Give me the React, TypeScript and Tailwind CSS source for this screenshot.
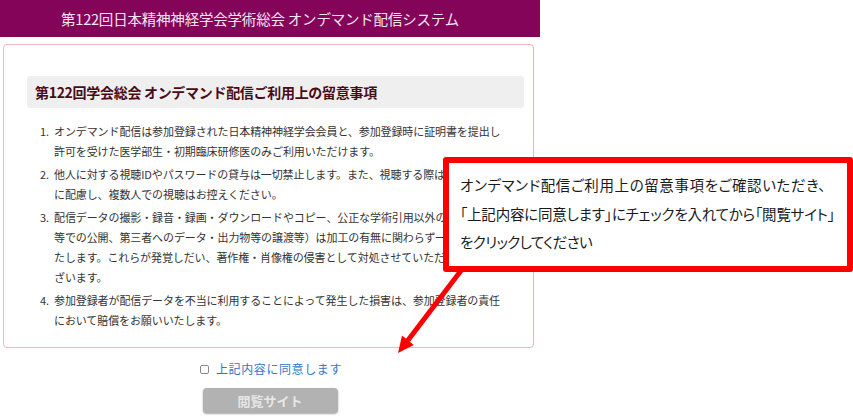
import { useState } from "react"

const notes: string[][] = [
  [
    "オンデマンド配信は参加登録された日本精神神経学会会員と、参加登録時に証明書を提出し",
    "許可を受けた医学部生・初期臨床研修医のみご利用いただけます。",
  ],
  [
    "他人に対する視聴IDやパスワードの貸与は一切禁止します。また、視聴する際は周囲の環境",
    "に配慮し、複数人での視聴はお控えください。",
  ],
  [
    "配信データの撮影・録音・録画・ダウンロードやコピー、公正な学術引用以外の二次利用（SNS",
    "等での公開、第三者へのデータ・出力物等の譲渡等）は加工の有無に関わらず一切禁止い",
    "たします。これらが発覚しだい、著作権・肖像権の侵害として対処させていただく場合がご",
    "ざいます。",
  ],
  [
    "参加登録者が配信データを不当に利用することによって発生した損害は、参加登録者の責任",
    "において賠償をお願いいたします。",
  ],
]

export default function App() {
  const [agreed, setAgreed] = useState(false)

  return (
    <div
      className="relative w-[853px] h-[417px] overflow-hidden bg-white"
      style={{ fontFamily: '"Noto Sans CJK JP", "Noto Sans", sans-serif' }}
    >
      <div className="w-[540px] flex flex-col">
        {/* Site header */}
        <header className="h-[37px] bg-[#84045a] flex items-center justify-center pr-[20px] text-[14.5px] text-[#f4e6ef] tracking-[-0.2px]">
          第122回日本精神神経学会学術総会 オンデマンド配信システム
        </header>

        {/* Terms panel */}
        <section className="mt-[7px] ml-[3px] w-[531px] h-[304px] border border-[#f3b4bb] rounded-[4px] pt-[31px]">
          <div className="ml-[23px] w-[497px] h-[32px] bg-[#efefef] rounded-[3px] flex items-center pl-[8px]">
            <h2 className="text-[14px] font-bold text-[#4a0b16] tracking-[-0.3px]">
              第122回学会総会 オンデマンド配信ご利用上の留意事項
            </h2>
          </div>

          <ol className="mt-[13px] ml-[36px] flex flex-col gap-[3px] text-[11px] leading-[20px] text-[#333]">
            {notes.map((lines, i) => (
              <li key={i} className="flex">
                <span className="w-[14px] shrink-0">{i + 1}.</span>
                <span className="whitespace-nowrap tracking-[-0.1px]">
                  {lines.map((line, j) => (
                    <span key={j} className="block">
                      {line}
                    </span>
                  ))}
                </span>
              </li>
            ))}
          </ol>
        </section>

        {/* Agreement */}
        <label className="mt-[13px] flex items-center justify-center gap-[7px] h-[16px] ml-[2px]">
          <input
            type="checkbox"
            checked={agreed}
            onChange={(e) => setAgreed(e.target.checked)}
            className="appearance-none w-[9px] h-[9px] border border-[#8a8a8a] rounded-[2px] bg-white"
          />
          <span className="text-[12px] text-[#3276c3] tracking-[0.6px]">上記内容に同意します</span>
        </label>

        <div className="mt-[11px] flex justify-center">
          <button
            disabled={!agreed}
            className="w-[135px] h-[25px] rounded-[4px] bg-[#b2b2b2] text-[13px] font-bold text-[#e6e6e6] shadow-[0_1px_2px_rgba(0,0,0,0.35)]"
          >
            閲覧サイト
          </button>
        </div>
      </div>

      {/* Arrow pointing at the checkbox */}
      <svg className="absolute left-0 top-0 pointer-events-none" width="853" height="417">
        <line x1="463" y1="268" x2="407.8" y2="340.4" stroke="#ff0000" strokeWidth="5" />
        <polygon points="398,353 413.8,345 402,335.6" fill="#ff0000" />
      </svg>

      {/* Callout */}
      <div className="absolute left-[443px] top-[157px] w-[410px] h-[115px] border-[6px] border-[#ff0000] rounded-[3px] bg-white pl-[11px] pt-[8px] text-[14.5px] leading-[28.5px] text-[#1a1a1a] [font-feature-settings:'palt']">
        <p className="whitespace-nowrap tracking-[0.6px]">オンデマンド配信ご利用上の留意事項をご確認いただき、</p>
        <p className="whitespace-nowrap tracking-[-0.2px]">「上記内容に同意します」にチェックを入れてから「閲覧サイト」</p>
        <p className="whitespace-nowrap tracking-[-0.6px]">をクリックしてください</p>
      </div>
    </div>
  )
}
